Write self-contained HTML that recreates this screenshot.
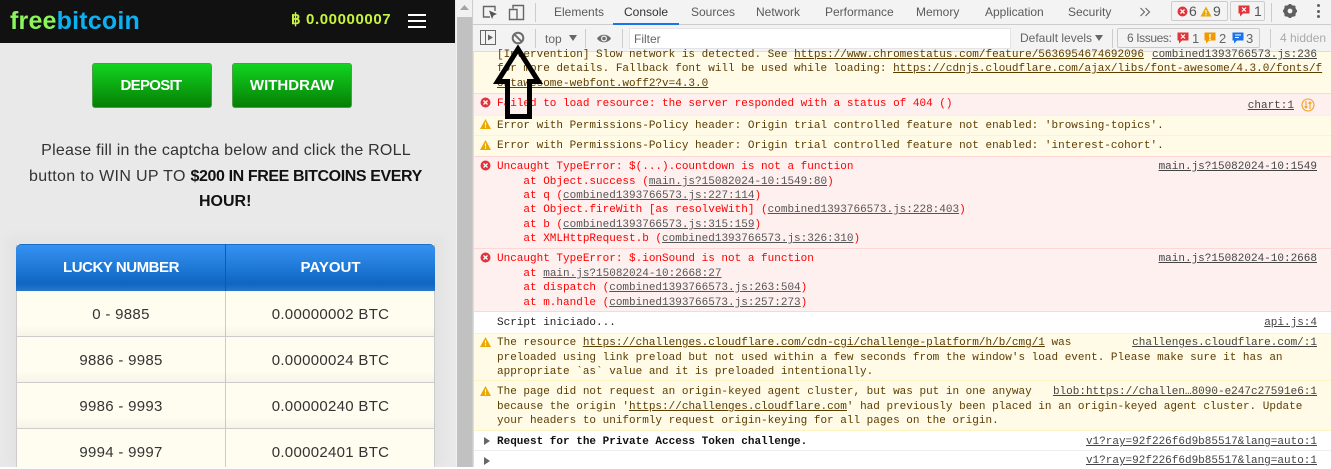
<!DOCTYPE html>
<html><head><meta charset="utf-8"><style>
html,body{margin:0;padding:0;width:1331px;height:467px;overflow:hidden;background:#fff}
div,span{box-sizing:border-box}
.a{position:absolute}
.s{position:absolute;font-family:"Liberation Sans",sans-serif;white-space:nowrap}
.btn{position:absolute;top:63px;width:120px;height:45px;border:1px solid #4c9c4c;border-radius:3px;background:linear-gradient(#12d41f,#067f06);color:#fff;font:bold 15px/43px "Liberation Sans",sans-serif;text-align:center}
.cell{position:absolute;text-align:center;font:15px/16px "Liberation Sans",sans-serif;color:#333;letter-spacing:.3px}
.hl{position:absolute;left:17px;width:418px;height:1px;background:#ccc}
.shade{position:absolute;left:17px;width:418px;height:12px;background:linear-gradient(rgba(0,0,0,0),rgba(0,0,0,.04))}
.tab{position:absolute;top:5px;font:12px/15px "Liberation Sans",sans-serif;color:#5a5a5a;white-space:nowrap}
.r{position:absolute;left:474px;right:0;border-top:1px solid}
.y{background:#fffbe7;border-color:#fff5c2}
.e{background:#fff0f0;border-color:#ffd6d6}
.w{background:#fff;border-color:#eee}
.t{position:absolute;left:497px;height:16px;margin-top:1px;font:11px/16px "Liberation Mono",monospace;letter-spacing:0;white-space:pre;color:#5c3c00}
.t u{text-decoration:underline}
.red{color:#f00}.red u{color:#555}
.blk{color:#222}.blk u{color:#555}
.src{position:absolute;right:14px;height:16px;margin-top:1px;font:11px/16px "Liberation Mono",monospace;letter-spacing:0;white-space:pre;color:#444;text-decoration:underline}
.sep{position:absolute;width:1px;background:#ccc}
</style></head><body>

<!-- LEFT PAGE -->
<div class="a" style="left:0;top:0;width:456px;height:467px;background:#e9e9e9"></div>
<div class="a" style="left:0;top:0;width:455px;height:43px;background:#111"></div>
<div class="s" style="left:10px;top:5px;font:bold 25px/32px 'Liberation Sans',sans-serif;letter-spacing:.2px;color:#8bf55c">free<span style="color:#0bb1f2">bitcoin</span></div>
<div class="s" style="left:291px;top:11px;font:bold 15px/18px 'Liberation Sans',sans-serif;color:#c6f53b">฿</div>
<div class="s" style="left:306px;top:11px;font:bold 15px/18px 'Liberation Sans',sans-serif;letter-spacing:.6px;color:#c6f53b">0.00000007</div>
<div class="a" style="left:408px;top:14px;width:18px;height:2px;background:#fff"></div>
<div class="a" style="left:408px;top:20px;width:18px;height:2px;background:#fff"></div>
<div class="a" style="left:408px;top:26px;width:18px;height:2px;background:#fff"></div>

<div class="btn" style="left:92px;letter-spacing:-.7px;text-indent:-2px">DEPOSIT</div>
<div class="btn" style="left:232px">WITHDRAW</div>

<div class="s" style="left:0;width:452px;top:141px;text-align:center;font-size:16px;line-height:20px;letter-spacing:.22px;color:#333">Please fill in the captcha below and click the ROLL</div>
<div class="s" style="left:29px;top:167px;font-size:16px;line-height:20px;letter-spacing:.34px;color:#333">button to WIN UP TO <b style="color:#111;letter-spacing:-.4px">$200 IN FREE BITCOINS EVERY</b></div>
<div class="s" style="left:199px;top:192px;font-size:16px;line-height:20px;font-weight:bold;color:#111">HOUR!</div>

<!-- TABLE -->
<div class="a" style="left:8px;top:236px;width:436px;height:231px;background:rgba(0,0,0,.025);filter:blur(5px)"></div>
<div class="a" style="left:16px;top:244px;width:419px;height:223px;background:#fffdf0;border-left:1px solid #ccc;border-right:1px solid #ccc"></div>
<div class="a" style="left:16px;top:244px;width:419px;height:47px;background:linear-gradient(#3592f2,#0f66c2 85%,#2a78c9);border-radius:5px 5px 0 0;border-top:1px solid #1a6ec5"></div>
<div class="a" style="left:225px;top:244px;width:1px;height:47px;background:#0c5cb0"></div>
<div class="a" style="left:225px;top:291px;width:1px;height:176px;background:#ccc"></div>
<div class="s" style="left:17px;width:208px;top:260px;text-align:center;font:bold 15px/16px 'Liberation Sans',sans-serif;letter-spacing:-.45px;color:#fff">LUCKY NUMBER</div>
<div class="s" style="left:226px;width:209px;top:260px;text-align:center;font:bold 15px/16px 'Liberation Sans',sans-serif;color:#fff">PAYOUT</div>

<div class="shade" style="top:325px"></div><div class="hl" style="top:336px"></div>
<div class="shade" style="top:371px"></div><div class="hl" style="top:382px"></div>
<div class="shade" style="top:417px"></div><div class="hl" style="top:428px"></div>

<div class="cell" style="left:17px;width:208px;top:307px">0 - 9885</div>
<div class="cell" style="left:226px;width:209px;top:307px">0.00000002 BTC</div>
<div class="cell" style="left:17px;width:208px;top:353px">9886 - 9985</div>
<div class="cell" style="left:226px;width:209px;top:353px">0.00000024 BTC</div>
<div class="cell" style="left:17px;width:208px;top:399px">9986 - 9993</div>
<div class="cell" style="left:226px;width:209px;top:399px">0.00000240 BTC</div>
<div class="cell" style="left:17px;width:208px;top:445px">9994 - 9997</div>
<div class="cell" style="left:226px;width:209px;top:445px">0.00002401 BTC</div>

<!-- SCROLLBAR -->
<div class="a" style="left:456px;top:0;width:17px;height:467px;background:#f1f1f1"></div>
<div class="a" style="left:457px;top:17px;width:15px;height:450px;background:#c1c1c1"></div>
<svg class="a" style="left:459px;top:4px" width="11" height="8"><path d="M1 6L5.500 1L10 6Z" fill="#a3a3a3"/></svg>
<div class="a" style="left:472px;top:0;width:1px;height:467px;background:#ccc"></div>

<!-- DEVTOOLS TOOLBARS -->
<div class="a" style="left:473px;top:0;width:858px;height:25px;background:#f3f3f3;border-bottom:1px solid #ccc"></div>
<div class="a" style="left:473px;top:25px;width:858px;height:27px;background:#f3f3f3;border-bottom:1px solid #ddd"></div>

<svg class="a" style="left:480px;top:3px" width="46" height="20" fill="none" stroke="#666" stroke-width="1.400">
<path d="M10 14H3.500V3.500H15V8"/><path d="M9 7.500L17 11L13.500 12.500L12 16Z" fill="#555" stroke="none"/>
<path d="M33 5.500V2.500H43.500V16.500H33M29.500 6.500H37V16.500H29.500Z"/></svg>
<div class="sep" style="left:535px;top:3px;height:19px"></div>

<div class="tab" style="left:554px">Elements</div>
<div class="tab" style="left:624px;color:#333">Console</div>
<div class="a" style="left:613px;top:23px;width:66px;height:2px;background:#1a73e8"></div>
<div class="tab" style="left:691px">Sources</div>
<div class="tab" style="left:756px">Network</div>
<div class="tab" style="left:825px">Performance</div>
<div class="tab" style="left:916px">Memory</div>
<div class="tab" style="left:985px">Application</div>
<div class="tab" style="left:1068px">Security</div>
<svg class="a" style="left:1139px;top:6px" width="14" height="12" fill="none" stroke="#666" stroke-width="1.100"><path d="M1.500 2L5.500 6L1.500 10M6.500 2L10.500 6L6.500 10"/></svg>

<!-- counters -->
<div class="a" style="left:1171px;top:1px;width:57px;height:20px;border:1px solid #ccc;border-radius:2px"></div>
<svg class="a" style="left:1177px;top:6px" width="11" height="11"><circle cx="5.500" cy="5.500" r="5" fill="#e0343a"/><path d="M3.500 3.500L7.500 7.500M7.500 3.500L3.500 7.500" stroke="#fff" stroke-width="1.300"/></svg>
<div class="s" style="left:1189px;top:4px;font-size:14px;line-height:15px;color:#555">6</div>
<svg class="a" style="left:1200px;top:6px" width="12" height="11"><path d="M6 .5L11.500 10.500H.5Z" fill="#eaa800"/><path d="M6 4V7.300M6 8V9.300" stroke="#fff" stroke-width="1.100"/></svg>
<div class="s" style="left:1213px;top:4px;font-size:14px;line-height:15px;color:#555">9</div>
<div class="a" style="left:1230px;top:1px;width:35px;height:20px;border:1px solid #ccc;border-radius:2px"></div>
<svg class="a" style="left:1238px;top:5px" width="12" height="12"><path d="M.5 .5H11.500V8.500H5L2 11.500V8.500H.5Z" fill="#e0343a"/><path d="M4 2.500L8 6.500M8 2.500L4 6.500" stroke="#fff" stroke-width="1.200"/></svg>
<div class="s" style="left:1254px;top:4px;font-size:14px;line-height:15px;color:#555">1</div>
<div class="sep" style="left:1271px;top:3px;height:19px"></div>
<svg class="a" style="left:1282px;top:3px" width="16" height="16" viewBox="0 0 16 16"><circle cx="8" cy="8" r="4.800" fill="none" stroke="#5f5f5f" stroke-width="3"/><path d="M8 1V15M1 8H15M3 3L13 13M13 3L3 13" stroke="#5f5f5f" stroke-width="2.600"/><circle cx="8" cy="8" r="2.400" fill="#f3f3f3"/></svg>
<div class="a" style="left:1317px;top:4px;width:3px;height:3px;background:#5f5f5f;border-radius:50%"></div>
<div class="a" style="left:1317px;top:10px;width:3px;height:3px;background:#5f5f5f;border-radius:50%"></div>
<div class="a" style="left:1317px;top:15px;width:3px;height:3px;background:#5f5f5f;border-radius:50%"></div>

<!-- second toolbar -->
<svg class="a" style="left:480px;top:30px" width="18" height="16" fill="none"><rect x=".5" y=".5" width="15" height="14" stroke="#666"/><path d="M5.500 1V15" stroke="#666"/><path d="M8 4.500L13 7.500L8 10.500Z" fill="#666"/></svg>
<svg class="a" style="left:511px;top:31px" width="14" height="14" fill="none" stroke="#6e6e6e" stroke-width="2"><circle cx="7" cy="7" r="5.300"/><path d="M3.300 3.300L10.700 10.700"/></svg>
<div class="sep" style="left:535px;top:29px;height:19px"></div>
<div class="s" style="left:545px;top:32px;font-size:12px;line-height:15px;color:#666">top</div>
<svg class="a" style="left:569px;top:35px" width="9" height="7"><path d="M0 0H8L4 6Z" fill="#666"/></svg>
<div class="sep" style="left:585px;top:29px;height:19px"></div>
<svg class="a" style="left:596px;top:32px" width="18" height="13"><path d="M1 6.500C4 1.500 12 1.500 15 6.500C12 11.500 4 11.500 1 6.500Z" fill="#6e6e6e"/><circle cx="8" cy="6.500" r="3" fill="#f3f3f3"/><circle cx="8" cy="6.500" r="1.800" fill="#6e6e6e"/></svg>
<div class="sep" style="left:622px;top:29px;height:19px"></div>
<div class="a" style="left:629px;top:28px;width:382px;height:21px;background:#fff;border:1px solid #e4e4e4"></div>
<div class="s" style="left:634px;top:32px;font-size:12px;line-height:15px;color:#666">Filter</div>
<div class="s" style="left:1020px;top:31px;font-size:12px;line-height:15px;color:#666">Default levels</div>
<svg class="a" style="left:1095px;top:35px" width="9" height="7"><path d="M0 0H8L4 6Z" fill="#666"/></svg>
<div class="sep" style="left:1112px;top:29px;height:19px"></div>
<div class="a" style="left:1117px;top:28px;width:143px;height:20px;border:1px solid #ccc;border-radius:2px"></div>
<div class="s" style="left:1127px;top:31px;font-size:12px;line-height:15px;letter-spacing:-.4px;color:#666">6 Issues:</div>
<svg class="a" style="left:1177px;top:32px" width="12" height="12"><path d="M.5 .5H11.500V8.500H5L2 11.500V8.500H.5Z" fill="#e0343a"/><path d="M4 2.500L8 6.500M8 2.500L4 6.500" stroke="#fff" stroke-width="1.200"/></svg>
<div class="s" style="left:1192px;top:31px;font-size:13px;line-height:15px;color:#666">1</div>
<svg class="a" style="left:1204px;top:32px" width="12" height="12"><path d="M.5 .5H11.500V8.500H5L2 11.500V8.500H.5Z" fill="#f29900"/><path d="M6 2V5.800M6 6.500V8" stroke="#fff" stroke-width="1.400"/></svg>
<div class="s" style="left:1219px;top:31px;font-size:13px;line-height:15px;color:#666">2</div>
<svg class="a" style="left:1232px;top:32px" width="12" height="12"><path d="M.5 .5H11.500V8.500H5L2 11.500V8.500H.5Z" fill="#1a73e8"/><path d="M3 3H9M3 5.500H7" stroke="#fff" stroke-width="1.100"/></svg>
<div class="s" style="left:1246px;top:31px;font-size:13px;line-height:15px;color:#666">3</div>
<div class="sep" style="left:1270px;top:29px;height:19px"></div>
<div class="s" style="left:1280px;top:31px;font-size:12px;line-height:15px;color:#aaa">4 hidden</div>

<!-- CONSOLE ROWS -->
<div class="r y" style="top:52px;height:41px;border-top:0"></div>
<div class="r e" style="top:93px;height:22px"></div>
<div class="r y" style="top:115px;height:21px"></div>
<div class="r y" style="top:135px;height:21px"></div>
<div class="r e" style="top:156px;height:93px"></div>
<div class="r e" style="top:248px;height:63px"></div>
<div class="r w" style="top:311px;height:22px;border-color:#ffd6d6"></div>
<div class="r y" style="top:333px;height:48px"></div>
<div class="r y" style="top:380px;height:50px"></div>
<div class="r w" style="top:430px;height:21px;border-color:#fff5c2"></div>
<div class="r w" style="top:450px;height:17px"></div>
<div class="a" style="left:473px;top:52px;width:1px;height:415px;background:#ddd"></div>

<div class="t" style="top:46px">[Intervention] Slow network is detected. See <u>https://www.chromestatus.com/feature/5636954674692096</u></div>
<div class="src" style="top:46px">combined1393766573.js:236</div>
<div class="t" style="top:60px">for more details. Fallback font will be used while loading: <u>https://cdnjs.cloudflare.com/ajax/libs/font-awesome/4.3.0/fonts/f</u></div>
<div class="t" style="top:75px"><u>ontawesome-webfont.woff2?v=4.3.0</u></div>

<div class="t red" style="top:95px">Failed to load resource: the server responded with a status of 404 ()</div>
<div class="src" style="top:97px;right:37px">chart:1</div>
<svg class="a" style="left:1301px;top:98px" width="14" height="14" fill="none" stroke="#f0a020" stroke-width="1.100"><circle cx="7" cy="7" r="6"/><path d="M5 3V10M3.500 8.500L5 10L6.500 8.500M9 11V4M7.500 5.500L9 4L10.500 5.500"/></svg>

<div class="t" style="top:117px">Error with Permissions-Policy header: Origin trial controlled feature not enabled: 'browsing-topics'.</div>
<div class="t" style="top:137px">Error with Permissions-Policy header: Origin trial controlled feature not enabled: 'interest-cohort'.</div>

<div class="t red" style="top:158px">Uncaught TypeError: $(...).countdown is not a function</div>
<div class="src" style="top:158px">main.js?15082024-10:1549</div>
<div class="t red" style="top:173px">    at Object.success (<u>main.js?15082024-10:1549:80</u>)</div>
<div class="t red" style="top:187px">    at q (<u>combined1393766573.js:227:114</u>)</div>
<div class="t red" style="top:201px">    at Object.fireWith [as resolveWith] (<u>combined1393766573.js:228:403</u>)</div>
<div class="t red" style="top:216px">    at b (<u>combined1393766573.js:315:159</u>)</div>
<div class="t red" style="top:230px">    at XMLHttpRequest.b (<u>combined1393766573.js:326:310</u>)</div>

<div class="t red" style="top:250px">Uncaught TypeError: $.ionSound is not a function</div>
<div class="src" style="top:250px">main.js?15082024-10:2668</div>
<div class="t red" style="top:265px">    at <u>main.js?15082024-10:2668:27</u></div>
<div class="t red" style="top:279px">    at dispatch (<u>combined1393766573.js:263:504</u>)</div>
<div class="t red" style="top:294px">    at m.handle (<u>combined1393766573.js:257:273</u>)</div>

<div class="t blk" style="top:314px">Script iniciado...</div>
<div class="src" style="top:314px">api.js:4</div>

<div class="t" style="top:334px">The resource <u>https://challenges.cloudflare.com/cdn-cgi/challenge-platform/h/b/cmg/1</u> was</div>
<div class="src" style="top:334px">challenges.cloudflare.com/:1</div>
<div class="t" style="top:349px">preloaded using link preload but not used within a few seconds from the window's load event. Please make sure it has an</div>
<div class="t" style="top:363px">appropriate `as` value and it is preloaded intentionally.</div>

<div class="t" style="top:383px">The page did not request an origin-keyed agent cluster, but was put in one anyway</div>
<div class="src" style="top:383px">blob:https://challen…8090-e247c27591e6:1</div>
<div class="t" style="top:398px">because the origin '<u>https://challenges.cloudflare.com</u>' had previously been placed in an origin-keyed agent cluster. Update</div>
<div class="t" style="top:412px">your headers to uniformly request origin-keying for all pages on the origin.</div>

<div class="t blk" style="top:433px;font-weight:bold;color:#111">Request for the Private Access Token challenge.</div>
<div class="src" style="top:433px">v1?ray=92f226f6d9b85517&amp;lang=auto:1</div>
<div class="src" style="top:452px">v1?ray=92f226f6d9b85517&amp;lang=auto:1</div>
<svg class="a" style="left:484px;top:437px" width="7" height="8"><path d="M0 0L6 4L0 8Z" fill="#666"/></svg>
<svg class="a" style="left:484px;top:457px" width="7" height="8"><path d="M0 0L6 4L0 8Z" fill="#666"/></svg>

<!-- icons -->
<svg class="a" style="left:480px;top:97px" width="11" height="11"><circle cx="5.500" cy="5.500" r="5" fill="#e0343a"/><path d="M3.500 3.500L7.500 7.500M7.500 3.500L3.500 7.500" stroke="#fff" stroke-width="1.300"/></svg>
<svg class="a" style="left:480px;top:160px" width="11" height="11"><circle cx="5.500" cy="5.500" r="5" fill="#e0343a"/><path d="M3.500 3.500L7.500 7.500M7.500 3.500L3.500 7.500" stroke="#fff" stroke-width="1.300"/></svg>
<svg class="a" style="left:480px;top:252px" width="11" height="11"><circle cx="5.500" cy="5.500" r="5" fill="#e0343a"/><path d="M3.500 3.500L7.500 7.500M7.500 3.500L3.500 7.500" stroke="#fff" stroke-width="1.300"/></svg>
<svg class="a" style="left:480px;top:119px" width="11" height="10"><path d="M5.500 0L11 10H0Z" fill="#eaa800"/><path d="M5.500 3.500V6.500M5.500 7.300V8.700" stroke="#fff" stroke-width="1.100"/></svg>
<svg class="a" style="left:480px;top:140px" width="11" height="10"><path d="M5.500 0L11 10H0Z" fill="#eaa800"/><path d="M5.500 3.500V6.500M5.500 7.300V8.700" stroke="#fff" stroke-width="1.100"/></svg>
<svg class="a" style="left:480px;top:337px" width="11" height="10"><path d="M5.500 0L11 10H0Z" fill="#eaa800"/><path d="M5.500 3.500V6.500M5.500 7.300V8.700" stroke="#fff" stroke-width="1.100"/></svg>
<svg class="a" style="left:480px;top:386px" width="11" height="10"><path d="M5.500 0L11 10H0Z" fill="#eaa800"/><path d="M5.500 3.500V6.500M5.500 7.300V8.700" stroke="#fff" stroke-width="1.100"/></svg>

<!-- Annotation arrow -->
<svg class="a" style="left:490px;top:36px" width="60" height="90"><path d="M28 13L7.500 45.500H17.500V80.500H39.500V45.500H48.500Z" fill="none" stroke="#000" stroke-width="5" stroke-linejoin="miter" stroke-miterlimit="8"/></svg>

</body></html>
